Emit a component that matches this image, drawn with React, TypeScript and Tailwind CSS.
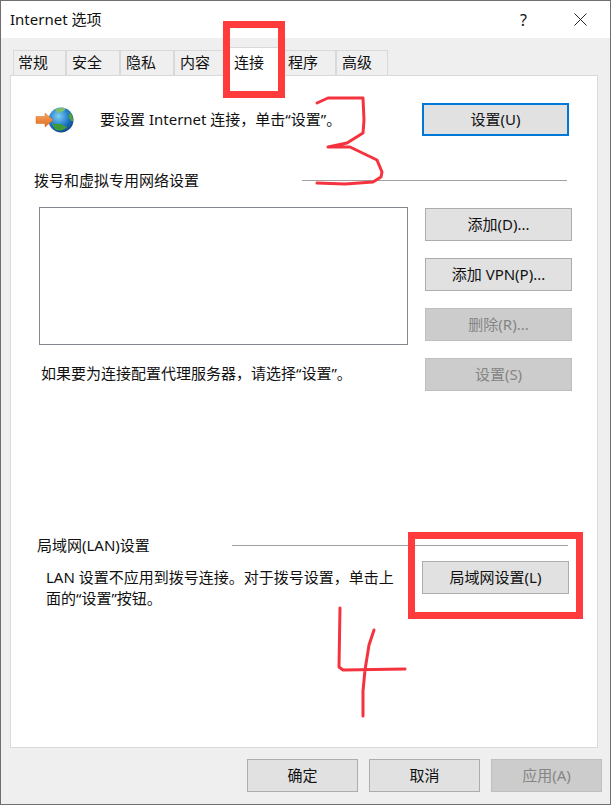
import React from 'react';

const tabs = [
    { name: '常规', w: 'w-[53px]', pad: 'pl-[4px]' },
    { name: '安全', w: 'w-[54px]', pad: 'pl-[5px]' },
    { name: '隐私', w: 'w-[54px]', pad: 'pl-[5px]' },
    { name: '内容', w: 'w-[54px]', pad: 'pl-[5px]' },
    { name: '连接', w: 'w-[54px]', pad: 'pl-[5px]' },
    { name: '程序', w: 'w-[54px]', pad: 'pl-[5px]' },
    { name: '高级', w: 'w-[52px]', pad: 'pl-[5px]' },
];

const Btn: React.FC<{ label: string; disabled?: boolean; focused?: boolean; className?: string }> = ({ label, disabled, focused, className }) => {
    let look = 'bg-[#e1e1e1] border border-[#adadad] text-[#111]';
    if (disabled) look = 'bg-[#cccccc] border border-[#bfbfbf] text-[#858585]';
    if (focused) look = 'bg-[#e1e1e1] border-2 border-[#0078d7] text-[#111]';
    return (
        <div className={`h-[33px] flex items-center justify-center text-[15px] leading-none ${look} ${className || ''}`}>
            {label}
        </div>
    );
};

const GlobeIcon = () => (
    <svg width="40" height="28" viewBox="0 0 40 28" className="shrink-0">
        <defs>
            <radialGradient id="sea" cx="0.4" cy="0.35" r="0.7">
                <stop offset="0" stopColor="#7fd0f2" />
                <stop offset="0.6" stopColor="#1f78c8" />
                <stop offset="1" stopColor="#123f86" />
            </radialGradient>
            <linearGradient id="arrow" x1="0" y1="0" x2="0" y2="1">
                <stop offset="0" stopColor="#f8a860" />
                <stop offset="1" stopColor="#e06a20" />
            </linearGradient>
        </defs>
        <circle cx="26" cy="14" r="12.5" fill="url(#sea)" />
        <path d="M20 4c3-2 7-2.500 10-2 1 2-1 3-3 3.500-1 2-4 2-7-1.500z" fill="#7fbf6a" />
        <path d="M35 6c2 2 3.500 6 3 9-2 1-4-2-4.500-5z" fill="#4f9e40" />
        <path d="M17 18c5-1 11 0 15 3-2 3-8 5-12 2z" fill="#3f9a38" />
        <path d="M1 10.500h9V7l8 7-8 7v-3.500H1z" fill="url(#arrow)" stroke="#d96a22" strokeWidth="0.5" />
    </svg>
);

export default function App() {
    return (
        <div className="relative w-[611px] h-[805px] flex flex-col border border-[#6f6f6f] bg-[#efefef] text-[#111] font-['Noto_Sans','Noto_Sans_CJK_SC',sans-serif] overflow-hidden">
            <div className="h-[37px] shrink-0 bg-white flex items-center pl-[9px] pr-[23px] text-[15px]">
                <span className="flex-1">Internet 选项</span>
                <span className="text-[16px] mr-[47px]">?</span>
                <svg width="13" height="13" viewBox="0 0 13 13">
                    <path d="M.5.500l12 12M12.500.500l-12 12" stroke="#222" strokeWidth="1" fill="none" />
                </svg>
            </div>

            <div className="flex items-end h-[37px] shrink-0 pl-[12px]">
                {tabs.map(t => (
                    t.name === '连接' ? (
                        <div key={t.name} className={`${t.w} ${t.pad} h-[29px] -mb-px z-10 bg-white border border-b-0 border-[#d9d9d9] text-[15px] pt-[3px]`}>
                            {t.name}
                        </div>
                    ) : (
                        <div key={t.name} className={`${t.w} ${t.pad} h-[25px] border border-b-0 border-[#d9d9d9] text-[15px] leading-[23px]`}>
                            {t.name}
                        </div>
                    )
                ))}
            </div>

            <div className="ml-[9px] w-[588px] h-[673px] shrink-0 bg-white border border-[#d9d9d9] flex flex-col">
                <div className="flex items-center mt-[27px] pl-[24px]">
                    <GlobeIcon />
                    <span className="text-[15px] ml-[25px] flex-1">要设置 Internet 连接，单击“设置”。</span>
                    <Btn label="设置(U)" focused className="w-[147px] mr-[28px]" />
                </div>

                <div className="flex items-center mt-[34px] pl-[23px] pr-[30px]">
                    <span className="w-[268px] text-[15px] leading-[20px]">拨号和虚拟专用网络设置</span>
                    <div className="flex-1 h-px bg-[#a0a0a0]" />
                </div>

                <div className="flex mt-[17px] pl-[28px]">
                    <div className="w-[369px]">
                        <div className="h-[138px] border border-[#828790] bg-white" />
                        <div className="text-[15px] leading-[20px] mt-[18px] pl-[2px]">如果要为连接配置代理服务器，请选择“设置”。</div>
                    </div>
                    <div className="w-[147px] ml-[17px] mt-px flex flex-col gap-[17px]">
                        <Btn label="添加(D)..." />
                        <Btn label="添加 VPN(P)..." />
                        <Btn label="删除(R)..." disabled />
                        <Btn label="设置(S)" disabled />
                    </div>
                </div>

                <div className="flex items-center mt-[144px] pl-[26px] pr-[29px]">
                    <span className="w-[195px] text-[15px] leading-[20px]">局域网(LAN)设置</span>
                    <div className="flex-1 h-px bg-[#a0a0a0]" />
                </div>

                <div className="flex mt-[6px] pl-[35px]">
                    <div className="w-[356px] text-[15px] leading-[21px] mt-[6px]">
                        LAN 设置不应用到拨号连接。对于拨号设置，单击上面的“设置”按钮。
                    </div>
                    <Btn label="局域网设置(L)" className="w-[147px] ml-[20px]" />
                </div>
            </div>

            <div className="flex justify-end gap-[11px] mt-[11px] pr-[9px]">
                <Btn label="确定" className="w-[111px]" />
                <Btn label="取消" className="w-[111px]" />
                <Btn label="应用(A)" disabled className="w-[111px] mr-[-1px]" />
            </div>

            {/* red pen marks drawn over the screenshot */}
            <svg className="absolute -left-px -top-px pointer-events-none z-20" width="611" height="805" viewBox="0 0 611 805" fill="none">
                <rect x="226.500" y="24.500" width="55" height="70" stroke="#ff3b3b" strokeWidth="7" />
                <rect x="411.500" y="535.500" width="168" height="80" stroke="#ff3b3b" strokeWidth="7" />
                <path d="M317 103L328 98H363L364 120L363 133L347 143L328 147H350L377 160L382 172L381 177L373 182L345 184L317 183" stroke="#f5333f" strokeWidth="3" strokeLinejoin="round" strokeLinecap="round" />
                <path d="M340 608L339 667L343 670L405 669M374 630L369 645L365 670L363 691V716" stroke="#f5333f" strokeWidth="3" strokeLinejoin="round" strokeLinecap="round" />
            </svg>
        </div>
    );
}
